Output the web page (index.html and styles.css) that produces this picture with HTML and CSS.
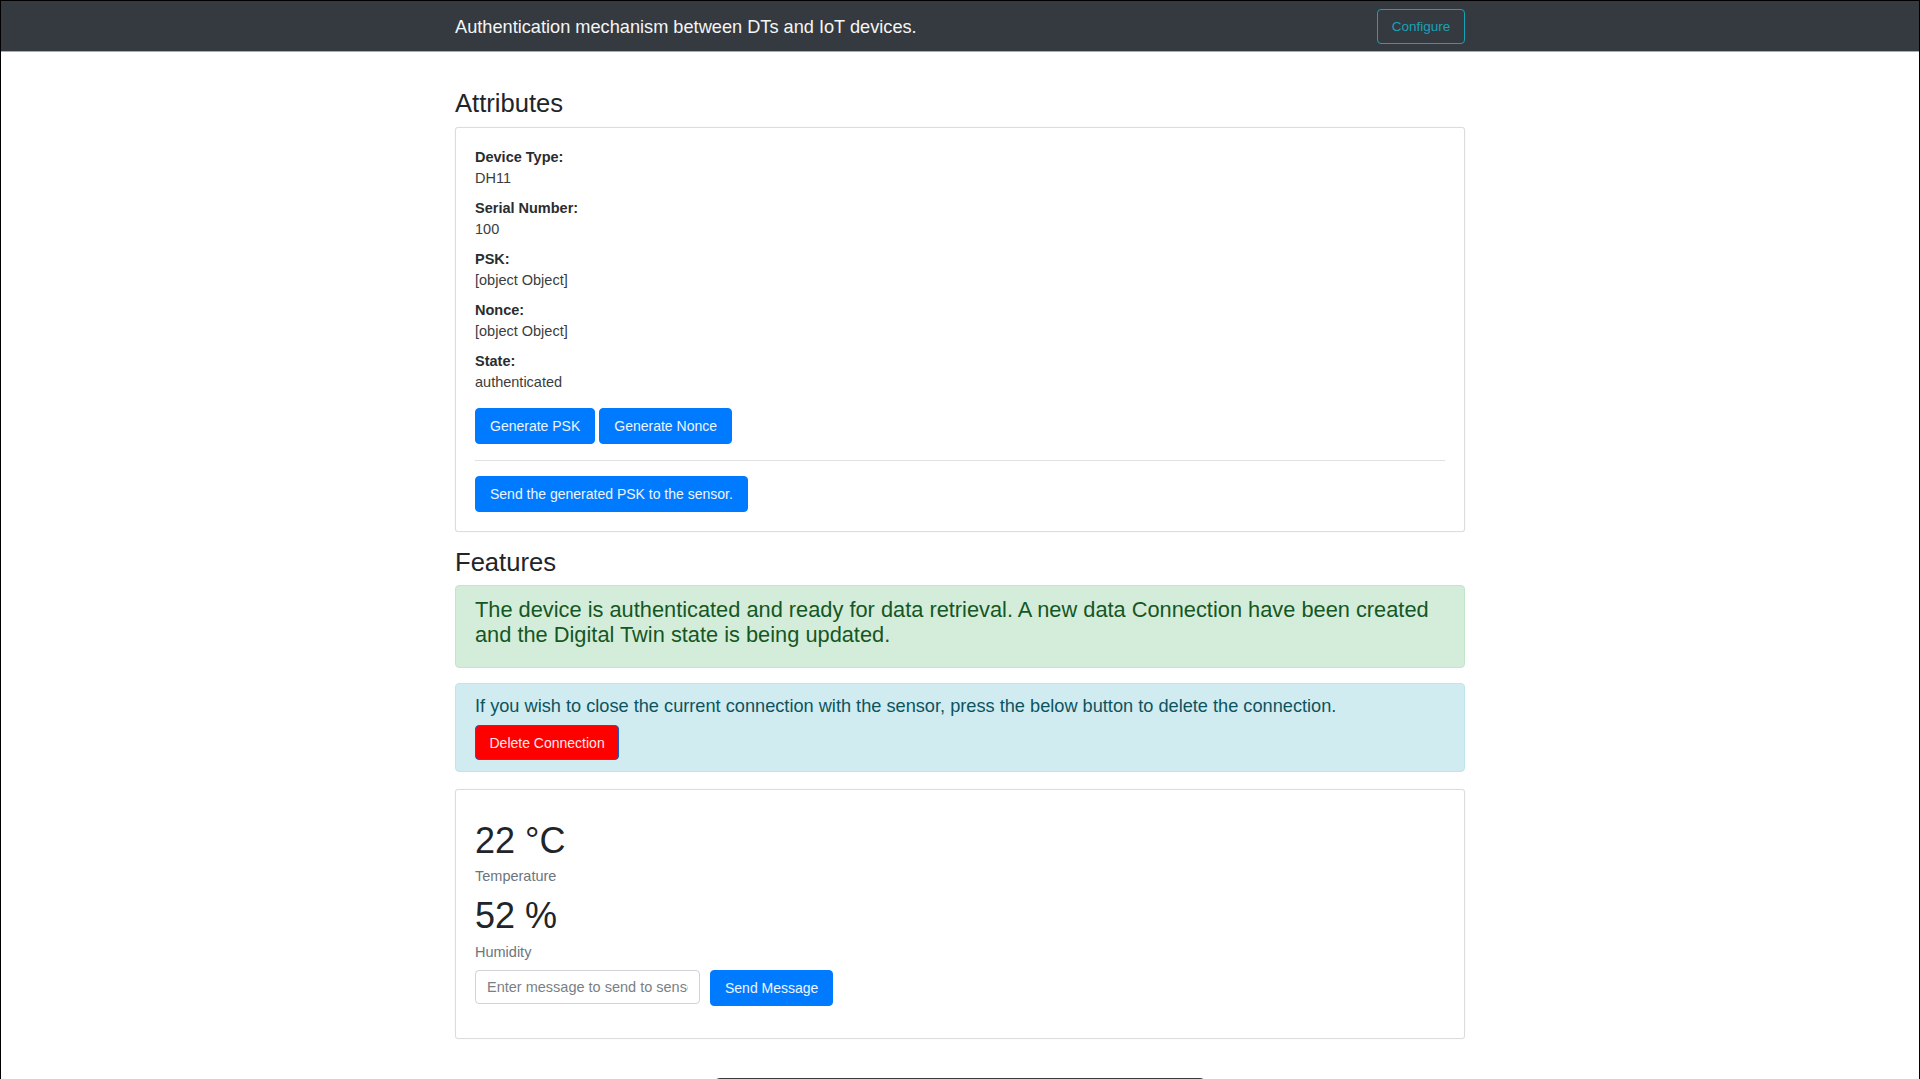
FILE: index.html
```html
<!DOCTYPE html>
<html lang="en">
<head>
<meta charset="utf-8">
<title>Authentication mechanism between DTs and IoT devices.</title>
<link rel="stylesheet" href="styles.css">
</head>
<body>
<div class="frame">
  <nav class="navbar">
    <div class="nav-inner">
      <span class="brand">Authentication mechanism between DTs and IoT devices.</span>
      <button class="btn-outline-info">Configure</button>
    </div>
  </nav>

  <main class="container">
    <h4 class="section-title first">Attributes</h4>
    <div class="card attr-card">
      <div class="item"><div class="label">Device Type:</div><div class="value">DH11</div></div>
      <div class="item"><div class="label">Serial Number:</div><div class="value">100</div></div>
      <div class="item"><div class="label">PSK:</div><div class="value">[object Object]</div></div>
      <div class="item"><div class="label">Nonce:</div><div class="value">[object Object]</div></div>
      <div class="item"><div class="label">State:</div><div class="value">authenticated</div></div>
      <div class="btn-row">
        <button class="btn btn-primary">Generate PSK</button>
        <button class="btn btn-primary">Generate Nonce</button>
      </div>
      <hr class="divider">
      <div class="btn-row single">
        <button class="btn btn-primary">Send the generated PSK to the sensor.</button>
      </div>
    </div>

    <h4 class="section-title">Features</h4>
    <div class="alert alert-success">
      <p class="success-text">The device is authenticated and ready for data retrieval. A new data Connection have been created and the Digital Twin state is being updated.</p>
    </div>

    <div class="alert alert-info">
      <p class="info-text">If you wish to close the current connection with the sensor, press the below button to delete the connection.</p>
      <button class="btn btn-danger-custom">Delete Connection</button>
    </div>

    <div class="card sensor-card">
      <div class="reading">22 °C</div>
      <div class="reading-label">Temperature</div>
      <div class="reading second">52 %</div>
      <div class="reading-label">Humidity</div>
      <form class="msg-form" onsubmit="return false;">
        <input class="msg-input" type="text" placeholder="Enter message to send to sensor">
        <button class="btn btn-primary" type="button">Send Message</button>
      </form>
    </div>

    <footer class="footer-bar"></footer>
  </main>
</div>
</body>
</html>
```

FILE: styles.css
```css
* { box-sizing: border-box; }

html, body {
  margin: 0;
  padding: 0;
  height: 100%;
  overflow: hidden;
  background: #ffffff;
}

body {
  font-family: "Liberation Sans", Arial, Helvetica, sans-serif;
  color: #212529;
}

.frame {
  min-height: 100vh;
  border-left: 1px solid #000;
  border-right: 1px solid #000;
  border-top: 1px solid #000;
}

.navbar {
  background: #343a40;
  height: 51px;
  border-bottom: 1px solid #a9abad;
  display: flex;
  justify-content: center;
  align-items: center;
}

.nav-inner {
  width: 1010px;
  display: flex;
  justify-content: space-between;
  align-items: center;
}

.brand {
  color: #f4f5f6;
  font-size: 18.2px;
  line-height: 27px;
  padding-top: 3px;
}

.btn-outline-info {
  font-family: "Liberation Sans", Arial, sans-serif;
  background: transparent;
  color: #17a2b8;
  border: 1px solid #17a2b8;
  border-radius: 4px;
  height: 35px;
  width: 88px;
  font-size: 13.5px;
  padding: 0;
  margin-top: 1px;
}

.container {
  width: 1010px;
  margin: 0 auto;
}

.section-title {
  font-size: 25.6px;
  font-weight: 400;
  line-height: 31px;
  margin: 15px 0 7px;
  color: #212529;
}

.section-title.first {
  margin: 36px 0 8px;
}

.card {
  border: 1px solid #dcdcdc;
  border-radius: 3px;
  box-shadow: 0 0 1px rgba(0, 0, 0, 0.12);
  background: #fff;
}

.attr-card {
  padding: 19px 19px 19px 19px;
}

.item {
  margin-bottom: 9px;
}

.label {
  font-size: 14.5px;
  font-weight: 700;
  line-height: 21px;
  color: #2a2d30;
}

.value {
  font-size: 14.5px;
  line-height: 21px;
  color: #3a3d40;
}

.btn-row {
  display: flex;
  gap: 4px;
  margin-top: 15px;
}

.btn-row.single {
  margin-top: 0;
}

.divider {
  border: 0;
  border-top: 1px solid #e2e2e2;
  margin: 16px 0 15px;
}

.btn {
  font-family: "Liberation Sans", Arial, sans-serif;
  font-size: 14px;
  height: 36px;
  padding: 0 14px;
  border-radius: 4px;
  border: 1px solid transparent;
  cursor: pointer;
}

.btn-primary {
  background: #007bff;
  border-color: #007bff;
  color: #eef4ff;
}

.alert {
  border-radius: 4px;
  border: 1px solid transparent;
}

.alert-success {
  background: #d4edda;
  border-color: #c3e6cb;
  color: #155724;
  padding: 11px 19px 20px;
}

.success-text {
  margin: 0;
  font-size: 21.8px;
  line-height: 25px;
}

.alert-info {
  background: #d1ecf1;
  border-color: #bee5eb;
  color: #0c5460;
  padding: 10px 19px 11px;
  margin-top: 15px;
}

.info-text {
  margin: 0 0 6px;
  font-size: 18.2px;
  line-height: 25px;
}

.btn-danger-custom {
  background: #ff0000;
  border: 1px solid #1a5bc4;
  color: #ffe9e9;
  height: 35px;
  padding: 0 13.5px;
}

.sensor-card {
  margin-top: 17px;
  padding: 29px 19px 32px;
}

.reading {
  font-size: 36px;
  line-height: 43px;
  color: #212529;
}

.reading-label {
  font-size: 14.5px;
  line-height: 21px;
  color: #6c757d;
  margin-top: 4px;
}

.reading-label + .reading { margin-top: 7px; }

.reading.second + .reading-label { margin-top: 5px; }

.msg-form {
  display: flex;
  align-items: flex-start;
  gap: 10px;
  margin: 7px 0 0;
}

.msg-input {
  font-family: "Liberation Sans", Arial, sans-serif;
  width: 225px;
  height: 34px;
  border: 1px solid #ced4da;
  border-radius: 4px;
  padding: 0 11px;
  font-size: 14.5px;
  color: #495057;
}

.msg-input::placeholder {
  color: #7a7f85;
}

.footer-bar {
  width: 492px;
  height: 40px;
  margin: 39px auto 0;
  background: #3b3b3b;
  border-radius: 6px 6px 0 0;
}
```
